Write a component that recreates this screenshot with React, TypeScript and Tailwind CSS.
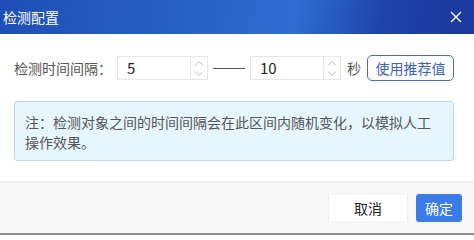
import React from "react";

function Spinner() {
  return (
    <div className="flex flex-col w-[17px] h-full border-l border-[#e6e6e6]">
      <div className="flex-1 flex items-center justify-center">
        <svg width="10" height="6" viewBox="0 0 10 6">
          <path d="M1 5.5 L5 1.5 L9 5.5" fill="none" stroke="#b9b9b9" strokeWidth="1" />
        </svg>
      </div>
      <div className="flex-1 flex items-center justify-center">
        <svg width="10" height="6" viewBox="0 0 10 6">
          <path d="M1 0.5 L5 4.5 L9 0.5" fill="none" stroke="#b9b9b9" strokeWidth="1" />
        </svg>
      </div>
    </div>
  );
}

function NumInput({ value }: { value: string }) {
  return (
    <div className="flex w-[91px] h-[24px] border border-[#e6e6e6] bg-white">
      <div className="flex-1 flex items-center pl-[9px] text-[15px] text-[#222]">{value}</div>
      <Spinner />
    </div>
  );
}

export default function App() {
  return (
    <div
      className="w-[474px] h-[235px] flex flex-col overflow-hidden"
      style={{ fontFamily: '"Microsoft YaHei", "Noto Sans CJK SC", "Noto Sans", sans-serif' }}
    >
      <div className="h-[34px] flex items-center justify-between pl-[3px] pr-[12px] bg-[linear-gradient(100deg,#1f4fb4_0%,#2a63c8_45%,#2f6dd2_62%,#1e44aa_80%,#1a379c_100%)]">
        <span className="text-white text-[14px] leading-none">检测配置</span>
        <svg width="12" height="12" viewBox="0 0 12 12">
          <path d="M1 1 L11 11 M11 1 L1 11" stroke="#ffffff" strokeWidth="1.4" />
        </svg>
      </div>
      <div className="flex-1 bg-white pl-[14px] pr-[20px] pt-[21px]">
        <div className="flex items-center h-[26px]">
          <span className="text-[14px] text-[#555] w-[103px] leading-none">检测时间间隔：</span>
          <NumInput value="5" />
          <div className="w-[32px] h-px bg-[#555] mx-[5px]" />
          <NumInput value="10" />
          <span className="text-[14px] text-[#555] ml-[6px] leading-none">秒</span>
          <button className="ml-[6px] w-[87px] h-[26px] rounded-[5px] border border-[#4a6cc0] text-[#3a63c0] text-[14px] bg-white leading-none">
            使用推荐值
          </button>
        </div>
        <div className="mt-[20px] w-[440px] rounded-[3px] border border-[#bfd6e6] bg-[#e6f6fe] pt-[10px] pb-[8px] px-[10px] text-[14px] leading-[20px] text-[#555]">
          注：检测对象之间的时间间隔会在此区间内随机变化，以模拟人工操作效果。
        </div>
      </div>
      <div className="h-[2px] bg-[#efefef]" />
      <div className="h-[52px] bg-[#f8f8f8] border-b-2 border-[#8c8c8c] flex items-center justify-end pr-[12px] gap-[8px]">
        <button className="w-[80px] h-[30px] bg-white border border-[#f0f0f0] text-[14px] text-[#222] leading-none">
          取消
        </button>
        <button className="w-[46px] h-[28px] rounded-[3px] bg-[#3a7de6] text-white text-[14px] leading-none">
          确定
        </button>
      </div>
    </div>
  );
}
